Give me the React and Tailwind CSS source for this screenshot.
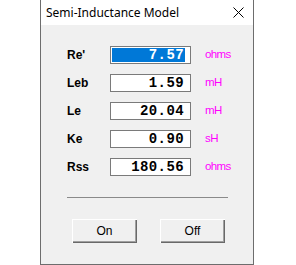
import React from "react";

const rows = [
  { label: "Re'", value: "7.57", unit: "ohms", selected: true },
  { label: "Leb", value: "1.59", unit: "mH" },
  { label: "Le", value: "20.04", unit: "mH" },
  { label: "Ke", value: "0.90", unit: "sH" },
  { label: "Rss", value: "180.56", unit: "ohms" },
];

function Row({ label, value, unit, selected }) {
  return (
    <div className="flex items-center h-[18px]">
      <div className="w-[43px] text-[12px] font-bold text-black font-['Liberation_Sans',Arial,sans-serif] leading-none">
        {label}
      </div>
      <div className="w-[81px] h-[18px] border border-[#7a7a7a] bg-white flex p-[1px] pr-[5px]">
        <div
          className={
            "flex-1 flex items-center justify-end pr-[1px] text-[14px] font-bold tracking-[0.4px] leading-none font-['Liberation_Mono','Courier_New',monospace] " +
            (selected ? "bg-[#0078d7] text-white" : "bg-white text-black")
          }
        >
          {value}
        </div>
      </div>
      <div className="ml-[14px] text-[11.5px] text-[#ff00ff] leading-none font-['Liberation_Sans',Arial,sans-serif] tracking-[-0.6px]">
        {unit}
      </div>
    </div>
  );
}

function Button({ children }) {
  return (
    <div className="w-[65px] h-[24px] bg-[#f0f0f0] flex items-center justify-center text-[12px] text-black font-['Liberation_Sans',Arial,sans-serif] shadow-[inset_1px_1px_0_#ffffff,inset_-1px_-1px_0_#696969,inset_-2px_-2px_0_#a0a0a0]">
      {children}
    </div>
  );
}

export default function App() {
  return (
    <div className="w-[296px] h-[265px] bg-white overflow-hidden">
      <div className="ml-[40px] w-[214px] h-[265px] border-l border-r border-b border-[#6d6d6d] flex flex-col">
        <div className="h-[25px] bg-white flex items-center justify-between pl-[5px] pr-[9px]">
          <span className="text-[12px] text-black font-['Noto_Sans','Segoe_UI',sans-serif] leading-none">
            Semi-Inductance Model
          </span>
          <svg width="11" height="11" viewBox="0 0 11 11" className="mb-[1px]">
            <path d="M0.5 0.5 L10.5 10.5 M10.5 0.5 L0.5 10.5" stroke="#000" strokeWidth="1" fill="none" />
          </svg>
        </div>
        <div className="flex-1 bg-[#f0f0f0] flex flex-col pt-[21px] pl-[26px]">
          <div className="flex flex-col gap-[10px]">
            {rows.map((r) => (
              <Row key={r.label} {...r} />
            ))}
          </div>
          <div className="mt-[21px] w-[161px] h-px bg-[#8a8a8a]" />
          <div className="mt-[21px] ml-[5px] flex gap-[23px]">
            <Button>On</Button>
            <Button>Off</Button>
          </div>
        </div>
      </div>
    </div>
  );
}
